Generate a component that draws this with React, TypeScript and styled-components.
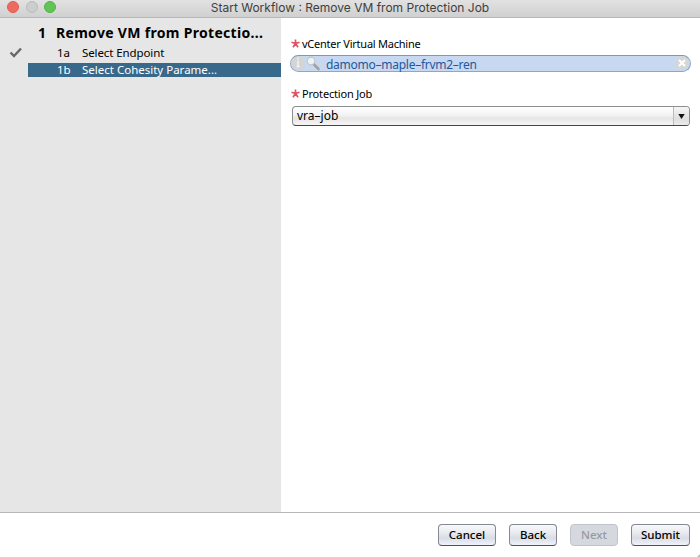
import React from "react";
import styled, { createGlobalStyle } from "styled-components";

const GlobalStyle = createGlobalStyle`
  *, *::before, *::after { box-sizing: border-box; }
  html, body, #root { height: 100%; }
  body { margin: 0; overflow: hidden; background: #fff; }
`;

const Window = styled.div`
  width: 700px;
  height: 557px;
  display: flex;
  flex-direction: column;
  background: #fff;
  color: #000;
  font-family: "Noto Sans", "Open Sans", sans-serif;
  font-size: 11.5px;
  white-space: nowrap;
`;

const TitleBar = styled.header`
  height: 18px;
  flex: none;
  display: grid;
  grid-template-columns: 60px 1fr 60px;
  align-items: center;
  background: linear-gradient(#e2e2e2, #d0d0d0);
  border-bottom: 1px solid #b9b9b9;
`;

const Lights = styled.div`
  display: flex;
  gap: 6.7px;
  padding: 0 0 3px 7px;
`;

const Light = styled.span<{ $fill: string; $edge: string }>`
  width: 12px;
  height: 12px;
  border-radius: 50%;
  background: ${(p) => p.$fill};
  border: 1px solid ${(p) => p.$edge};
`;

const Title = styled.h1`
  margin: 0;
  padding-bottom: 1px;
  text-align: center;
  font: 400 12px/14px Inter, sans-serif;
  color: #404040;
`;

const Label = styled.span<{ $spacing?: number }>`
  letter-spacing: ${(p) => p.$spacing ?? 0}px;
`;

const Body = styled.main`
  flex: 1;
  display: flex;
  min-height: 0;
`;

const Sidebar = styled.nav`
  width: 281px;
  background: #e6e6e6;
  padding-top: 6px;
`;

const WorkflowHeading = styled.h2`
  margin: 0;
  height: 19px;
  display: grid;
  grid-template-columns: 18px 1fr;
  padding-left: 38px;
  font-size: 14px;
  line-height: 18px;
  font-weight: 700;
`;

const Step = styled.div`
  height: 18px;
  display: grid;
  grid-template-columns: 28px 1fr;
  align-items: center;
`;

const StepMark = styled.span`
  padding-left: 9px;
  line-height: 0;
`;

const StepName = styled.div<{ $active?: boolean }>`
  height: 14px;
  display: grid;
  grid-template-columns: 25px 1fr;
  padding-left: 29px;
  line-height: ${(p) => (p.$active ? 14 : 16)}px;
  color: ${(p) => (p.$active ? "#fff" : "#000")};
  background: ${(p) => (p.$active ? "#38698b" : "transparent")};
`;

const Form = styled.section`
  flex: 1;
  padding: 18px 9px 0 10px;
`;

const FieldLabel = styled.div`
  height: 15px;
  display: flex;
  align-items: center;
  gap: 2px;
  line-height: 15px;
  font-size: 11px;
`;

const LookupField = styled.div`
  height: 17px;
  margin: 4px 0 14px -1px;
  display: flex;
  align-items: center;
  border: 1px solid #8fa5cb;
  border-top-color: #8299aa;
  border-radius: 9px;
  background: #c7d8f0;
  color: #23599b;
  font-size: 12px;
  line-height: 15px;

  svg { flex: none; }
`;

const LookupText = styled.span`
  flex: 1;
  padding: 1px 0 0 5px;
`;

const Select = styled.div`
  height: 20px;
  margin: 5px 1px 0;
  display: flex;
  border: 1px solid #8d8f8e;
  border-bottom-color: #454545;
  border-radius: 4px;
  background: linear-gradient(#fff, #f3f3f3 45%, #e5e5e5 62%, #f6f6f6);
  overflow: hidden;
`;

const SelectValue = styled.span`
  flex: 1;
  padding-left: 4px;
  line-height: 18px;
  font-size: 12px;
`;

const SelectArrow = styled.span`
  width: 16px;
  display: flex;
  align-items: center;
  justify-content: center;
  border-left: 1px solid #bbb;
  background: linear-gradient(#f6f6f6, #dedede 65%, #ececec);
`;

const Footer = styled.footer`
  height: 45px;
  flex: none;
  display: flex;
  justify-content: flex-end;
  gap: 13px;
  padding: 11px 10px 0;
  border-top: 1px solid #b8b8b8;
  position: relative;
`;

const Button = styled.button<{ $width: number }>`
  width: ${(p) => p.$width}px;
  height: 22px;
  padding: 0 0 1px;
  border: 1px solid #858993;
  border-bottom-color: #4d515c;
  border-radius: 4px;
  background: linear-gradient(#f8f9fb, #e5e8ed 45%, #d8dce4 65%, #f0f3fa);
  font: 500 11.5px/18px "Noto Sans", sans-serif;
  color: #000;

  &:disabled {
    background: #d5d9df;
    border-color: #c0c4ca;
    color: #969aa0;
  }
`;

const Grip = styled.svg`
  position: absolute;
  right: 0;
  bottom: 0;
`;

const Required = () => (
  <svg width="9" height="9" viewBox="0 0 9 9" stroke="#dd5366" strokeWidth="1.7">
    <path d="M4.5 .5v4M.5 3.2l4 1.3M8.5 3.2l-4 1.3M2 8.2l2.5-3.7M7 8.2 4.5 4.5" />
  </svg>
);

export default function App() {
  return (
    <>
      <GlobalStyle />
      <Window>
        <TitleBar>
          <Lights>
            <Light $fill="#ee6a5f" $edge="#e15b51" />
            <Light $fill="#cdcdcd" $edge="#bababa" />
            <Light $fill="#61c454" $edge="#52b345" />
          </Lights>
          <Title><Label>Start Workflow : Remove VM from Protection Job</Label></Title>
        </TitleBar>
        <Body>
          <Sidebar>
            <WorkflowHeading>
              <span>1</span>
              <Label $spacing={0.31}>Remove VM from Protectio...</Label>
            </WorkflowHeading>
            <Step>
              <StepMark>
                <svg width="14" height="11" viewBox="0 0 14 11" fill="none" stroke="#686868" strokeWidth="2.4">
                  <path d="M1.5 5.5 5 9l7-7.5" />
                </svg>
              </StepMark>
              <StepName><span>1a</span><Label $spacing={-0.1}>Select Endpoint</Label></StepName>
            </Step>
            <Step>
              <span />
              <StepName $active><span>1b</span><Label>Select Cohesity Parame...</Label></StepName>
            </Step>
          </Sidebar>
          <Form>
            <FieldLabel><Required /><Label $spacing={-0.23}>vCenter Virtual Machine</Label></FieldLabel>
            <LookupField>
              <svg width="14" height="15" viewBox="0 0 14 15">
                <circle cx="7" cy="7.5" r="7" fill="#d4d4d4" />
                <path d="M7 1.8v1.8M7 4.5v6M5.5 10.5h3" stroke="#f3f3f3" strokeWidth="1.5" />
              </svg>
              <svg width="16" height="15" viewBox="0 0 16 15">
                <path d="m8.5 8 5 5" stroke="#a6a19b" strokeWidth="2.6" strokeLinecap="round" />
                <circle cx="6" cy="5" r="3.8" fill="#edf2f5" stroke="#c2c5c8" strokeWidth="1.2" />
              </svg>
              <LookupText><Label $spacing={-0.26}>damomo–maple–frvm2–ren</Label></LookupText>
              <svg width="15" height="15" viewBox="0 0 15 15">
                <circle cx="7" cy="7" r="7" fill="#d5d7d6" />
                <path d="m4 4 6 6M10 4l-6 6" stroke="#fff" strokeWidth="2" />
              </svg>
            </LookupField>
            <FieldLabel><Required /><Label $spacing={-0.18}>Protection Job</Label></FieldLabel>
            <Select>
              <SelectValue><Label>vra–job</Label></SelectValue>
              <SelectArrow>
                <svg width="7" height="5" viewBox="0 0 7 5"><path d="M.3 0h6.4L3.5 5z" fill="#111" /></svg>
              </SelectArrow>
            </Select>
          </Form>
        </Body>
        <Footer>
          <Button $width={58}>Cancel</Button>
          <Button $width={48}>Back</Button>
          <Button $width={48} disabled>Next</Button>
          <Button $width={59}>Submit</Button>
          <Grip width="3" height="3"><path d="M0 3 3 0v3z" fill="#bbb" /></Grip>
        </Footer>
      </Window>
    </>
  );
}
